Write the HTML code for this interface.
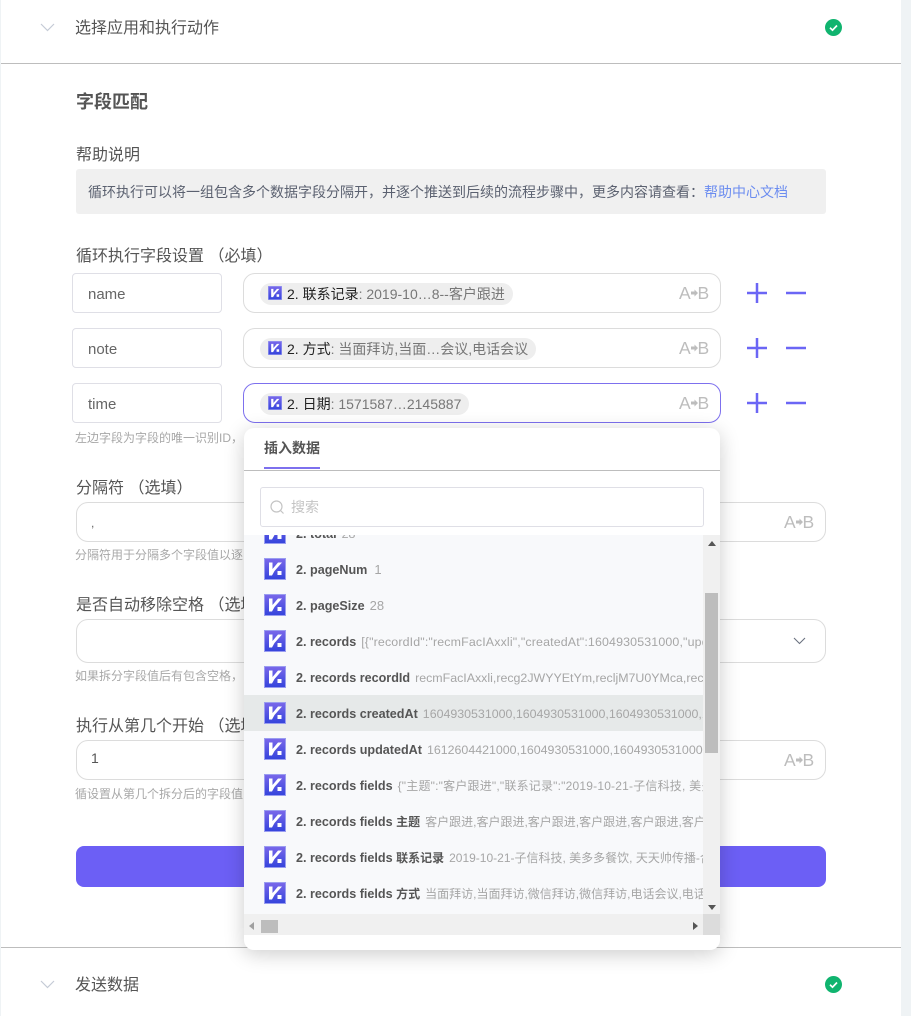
<!DOCTYPE html>
<html lang="zh"><head><meta charset="utf-8"><title>字段匹配</title>
<style>
*{box-sizing:border-box}
html,body{margin:0;padding:0;width:911px;height:1016px;overflow:hidden;background:#eff3f5}
body{position:relative;font-family:"Liberation Sans","Noto Sans CJK SC",sans-serif;color:#555}
.a{position:absolute;white-space:nowrap}
#card{position:absolute;left:1px;top:0;width:900px;height:1016px;background:#fff}
.hr{position:absolute;left:1px;width:900px;height:1px;background:#bdbdbd}
.lab{font-size:16px;line-height:22px;color:#555}
.hint{font-size:12px;line-height:16px;color:#a8a8a8}
.box{position:absolute;background:#fff;border:1px solid #dcdcdc;border-radius:12px}
.key{position:absolute;left:72px;width:150px;height:40px;background:#fff;border:1px solid #dfdfe6;border-radius:4px;font-size:15px;line-height:41px;padding-left:15px;color:#666}
.val{left:243px;width:478px;height:40px}
.chip{position:absolute;left:260px;height:22px;border-radius:11px;background:#eee;font-size:14px;line-height:22px;color:#777;padding:0 8px 0 27px;white-space:nowrap}
.chip b{font-weight:400;color:#222}
.ab{position:absolute;width:32px;height:20px;font-size:17.500px;line-height:20px;color:#bdbdbd}
.ab span{position:absolute;top:0;left:0}
.ab span:last-child{left:18.500px}
.ab svg{position:absolute;left:12px;top:6px}
.row{position:absolute;left:0;width:459px;height:36px;overflow:hidden;white-space:nowrap;font-size:12px;line-height:38px;color:#a6a6a6;padding-left:52px}
.n{font-size:12.400px}
.row b{font-weight:700;color:#555;margin-right:5px;font-size:12.600px}
.row b u{text-decoration:none;font-size:12px}
.row svg{position:absolute;left:20px;top:7px}
</style></head><body>
<svg width="0" height="0" style="position:absolute"><defs>
<linearGradient id="g" x1="0" y1="0" x2="0" y2="1"><stop offset="0" stop-color="#7a68ea"/><stop offset="1" stop-color="#3444dc"/></linearGradient>
<symbol id="k" viewBox="0 0 22 22"><rect x=".5" y=".5" width="21" height="21" fill="url(#g)" stroke="#9a9df0"/><path d="M5 4.500h3.500v6.500L14 4.500h4L10.500 13 8 17.500H5z" fill="#fff"/><rect x="13.500" y="13" width="4" height="4" fill="#fff"/></symbol>
<symbol id="arr" viewBox="0 0 7 8"><path d="M0 2.500h3.500V0.500L7 4 3.500 7.500v-2H0z" fill="#bdbdbd"/></symbol>
</defs></svg>
<div id="card"></div>
<div class="hr" style="top:63px"></div>
<div class="hr" style="top:947px"></div>

<svg class="a" style="left:40px;top:23px" width="15" height="9" fill="none" stroke="#c5cbd6" stroke-width="1.2"><path d="M1 1l6.500 6.500L14 1"/></svg>
<div class="a lab" style="left:75px;top:18px">选择应用和执行动作</div>
<svg class="a" style="left:825px;top:19px" width="17" height="17"><circle cx="8.500" cy="8.500" r="8.500" fill="#10b46f"/><path d="M5 8.800l2.500 2.400L12 6.500" fill="none" stroke="#fff" stroke-width="1.700"/></svg>

<div class="a" style="left:76px;top:90px;font-size:18px;line-height:24px;font-weight:700;color:#555">字段匹配</div>
<div class="a lab" style="left:76px;top:145px">帮助说明</div>
<div class="a" style="left:76px;top:169px;width:750px;height:45px;background:#f0f0f0;border-radius:3px"></div>
<div class="a" style="left:88px;top:181px;font-size:14px;line-height:22px;color:#5b6170">循环执行可以将一组包含多个数据字段分隔开，并逐个推送到后续的流程步骤中，更多内容请查看：<span style="color:#6c8df0">帮助中心文档</span></div>

<div class="a lab" style="left:76px;top:246px">循环执行字段设置 （必填）</div>

<div class="key" style="top:273px">name</div>
<div class="box val" style="top:273px"></div>
<div class="chip" style="top:283px"><b>2. 联系记录</b>: 2019-10…8--客户跟进</div>
<svg class="a" style="left:268px;top:286px" width="14" height="14"><use href="#k"/></svg>
<div class="ab" style="left:679px;top:283px"><span>A</span><svg width="7" height="8"><use href="#arr"/></svg><span>B</span></div>
<svg class="a" style="left:746px;top:282px" width="22" height="22" fill="none" stroke="#6b66f5" stroke-width="2.500"><path d="M11 1v20M1 11h20"/></svg>
<svg class="a" style="left:785px;top:282px" width="22" height="22" fill="none" stroke="#6b66f5" stroke-width="2.500"><path d="M1 11h20"/></svg>

<div class="key" style="top:328px">note</div>
<div class="box val" style="top:328px"></div>
<div class="chip" style="top:338px"><b>2. 方式</b>: 当面拜访,当面…会议,电话会议</div>
<svg class="a" style="left:268px;top:341px" width="14" height="14"><use href="#k"/></svg>
<div class="ab" style="left:679px;top:338px"><span>A</span><svg width="7" height="8"><use href="#arr"/></svg><span>B</span></div>
<svg class="a" style="left:746px;top:337px" width="22" height="22" fill="none" stroke="#6b66f5" stroke-width="2.500"><path d="M11 1v20M1 11h20"/></svg>
<svg class="a" style="left:785px;top:337px" width="22" height="22" fill="none" stroke="#6b66f5" stroke-width="2.500"><path d="M1 11h20"/></svg>

<div class="key" style="top:383px">time</div>
<div class="box val" style="top:383px;border-color:#7d70ee"></div>
<div class="chip" style="top:393px"><b>2. 日期</b>: 1571587…2145887</div>
<svg class="a" style="left:268px;top:396px" width="14" height="14"><use href="#k"/></svg>
<div class="ab" style="left:679px;top:393px"><span>A</span><svg width="7" height="8"><use href="#arr"/></svg><span>B</span></div>
<svg class="a" style="left:746px;top:392px" width="22" height="22" fill="none" stroke="#6b66f5" stroke-width="2.500"><path d="M11 1v20M1 11h20"/></svg>
<svg class="a" style="left:785px;top:392px" width="22" height="22" fill="none" stroke="#6b66f5" stroke-width="2.500"><path d="M1 11h20"/></svg>

<div class="a hint" style="left:75px;top:430px">左边字段为字段的唯一识别ID，</div>

<div class="a lab" style="left:76px;top:478px">分隔符 （选填）</div>
<div class="box" style="left:76px;top:502px;width:750px;height:40px"></div>
<div class="a" style="left:91px;top:512px;font-size:12px;line-height:22px;color:#666">,</div>
<div class="ab" style="left:784px;top:512px"><span>A</span><svg width="7" height="8"><use href="#arr"/></svg><span>B</span></div>
<div class="a hint" style="left:75px;top:547px">分隔符用于分隔多个字段值以逐</div>

<div class="a lab" style="left:76px;top:595px">是否自动移除空格 （选填）</div>
<div class="box" style="left:76px;top:619px;width:750px;height:44px"></div>
<svg class="a" style="left:793px;top:637px" width="13" height="8" fill="none" stroke="#6b7280" stroke-width="1.100"><path d="M1 1l5.500 5.500L12 1"/></svg>
<div class="a hint" style="left:75px;top:668px">如果拆分字段值后有包含空格，</div>

<div class="a lab" style="left:76px;top:716px">执行从第几个开始 （选填）</div>
<div class="box" style="left:76px;top:740px;width:750px;height:40px"></div>
<div class="a" style="left:91px;top:747px;font-size:14px;line-height:22px;color:#555">1</div>
<div class="ab" style="left:784px;top:750px"><span>A</span><svg width="7" height="8"><use href="#arr"/></svg><span>B</span></div>
<div class="a hint" style="left:75px;top:786px">循设置从第几个拆分后的字段值</div>

<div class="a" style="left:76px;top:846px;width:750px;height:41px;background:#6c5ff5;border-radius:8px"></div>

<svg class="a" style="left:40px;top:980px" width="15" height="9" fill="none" stroke="#c5cbd6" stroke-width="1.2"><path d="M1 1l6.500 6.500L14 1"/></svg>
<div class="a lab" style="left:75px;top:975px">发送数据</div>
<svg class="a" style="left:825px;top:976px" width="17" height="17"><circle cx="8.500" cy="8.500" r="8.500" fill="#10b46f"/><path d="M5 8.800l2.500 2.400L12 6.500" fill="none" stroke="#fff" stroke-width="1.700"/></svg>

<!-- popup -->
<div class="a" style="left:244px;top:428px;width:476px;height:522px;background:#fff;border-radius:10px;box-shadow:0 4px 20px rgba(0,0,0,.2);overflow:hidden">
  <div class="a" style="left:20px;top:10px;font-size:14px;line-height:20px;font-weight:700;color:#555">插入数据</div>
  <div class="a" style="left:20px;top:39px;width:56px;height:2px;background:#7d70ee"></div>
  <div class="a" style="left:0;top:42px;width:476px;height:1px;background:#bdbdbd"></div>
  <div class="a" style="left:16px;top:59px;width:444px;height:40px;border:1px solid #dfdfe6;border-radius:3px"></div>
  <svg class="a" style="left:26px;top:72px" width="15" height="15" fill="none" stroke="#c4c4c4" stroke-width="1.200"><circle cx="6.500" cy="6.500" r="5.500"/><path d="M10.500 10.500l3 3"/></svg>
  <div class="a" style="left:47px;top:69px;font-size:14px;line-height:20px;color:#c4c4c4">搜索</div>

  <div class="a" style="left:0;top:107px;width:476px;height:379px;background:#f8f9fb;overflow:hidden">
    <div class="row n" style="top:-20px"><svg width="22" height="22"><use href="#k"/></svg><b>2. total</b>28</div>
    <div class="row" style="top:16px;font-size:13px"><svg width="22" height="22"><use href="#k"/></svg><b style="margin-right:7px">2. pageNum</b>1</div>
    <div class="row" style="top:52px;font-size:13px"><svg width="22" height="22"><use href="#k"/></svg><b>2. pageSize</b>28</div>
    <div class="row n" style="top:88px;letter-spacing:.15px"><svg width="22" height="22"><use href="#k"/></svg><b style="letter-spacing:0">2. records</b>[{"recordId":"recmFacIAxxli","createdAt":1604930531000,"updatedAt"</div>
    <div class="row n" style="top:124px"><svg width="22" height="22"><use href="#k"/></svg><b>2. records recordId</b>recmFacIAxxli,recg2JWYYEtYm,recljM7U0YMca,recRaNdOm</div>
    <div class="row n" style="top:160px;background:#e6e9e9"><svg width="22" height="22"><use href="#k"/></svg><b>2. records createdAt</b>1604930531000,1604930531000,1604930531000,16049</div>
    <div class="row n" style="top:196px"><svg width="22" height="22"><use href="#k"/></svg><b>2. records updatedAt</b>1612604421000,1604930531000,1604930531000,16049</div>
    <div class="row" style="top:232px;letter-spacing:.2px"><svg width="22" height="22"><use href="#k"/></svg><b style="letter-spacing:0">2. records fields</b>{"主题":"客户跟进","联系记录":"2019-10-21-子信科技, 美多多餐饮</div>
    <div class="row" style="top:268px"><svg width="22" height="22"><use href="#k"/></svg><b>2. records fields <u>主题</u></b>客户跟进,客户跟进,客户跟进,客户跟进,客户跟进,客户跟进</div>
    <div class="row" style="top:304px"><svg width="22" height="22"><use href="#k"/></svg><b>2. records fields <u>联系记录</u></b>2019-10-21-子信科技, 美多多餐饮, 天天帅传播-合作</div>
    <div class="row" style="top:340px"><svg width="22" height="22"><use href="#k"/></svg><b>2. records fields <u>方式</u></b>当面拜访,当面拜访,微信拜访,微信拜访,电话会议,电话会议,电话</div>
    <!-- v scrollbar -->
    <div class="a" style="left:459px;top:0;width:17px;height:379px;background:#f0f0f0"></div>
    <div class="a" style="left:461px;top:58px;width:13px;height:160px;background:#bdbdbd"></div>
    <svg class="a" style="left:464px;top:6px" width="8" height="5"><path d="M4 0l4 5H0z" fill="#555"/></svg>
    <svg class="a" style="left:464px;top:370px" width="8" height="5"><path d="M0 0h8L4 5z" fill="#555"/></svg>
  </div>
  <!-- h scrollbar -->
  <div class="a" style="left:0;top:486px;width:459px;height:21px;background:#f0f0f0"></div>
  <div class="a" style="left:459px;top:486px;width:17px;height:21px;background:#dcdcdc"></div>
  <div class="a" style="left:17px;top:492px;width:17px;height:13px;background:#bdbdbd"></div>
  <svg class="a" style="left:5px;top:494px" width="5" height="8"><path d="M5 0v8L0 4z" fill="#a0a0a0"/></svg>
  <svg class="a" style="left:449px;top:494px" width="5" height="8"><path d="M0 0v8l5-4z" fill="#555"/></svg>
</div>
</body></html>
